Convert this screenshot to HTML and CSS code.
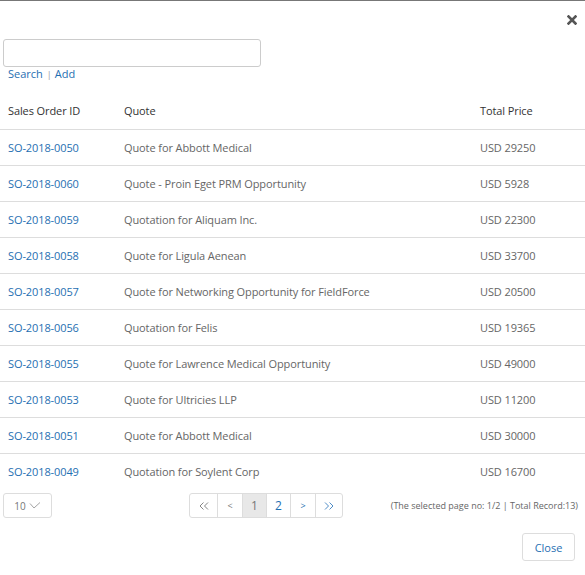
FILE: index.html
```html
<!DOCTYPE html>
<html>
<head>
<meta charset="utf-8">
<link rel="stylesheet" href="styles.css">
</head>
<body>
<div class="modal">
  <div class="top">
    <span class="close-x">
      <svg width="10" height="10" viewBox="0 0 10 10"><path d="M1.5 1.5 L8.5 8.5 M8.5 1.5 L1.5 8.5" stroke="#555" stroke-width="2.6" stroke-linecap="square"/></svg>
    </span>
  </div>
  <div class="search">
    <input class="search-input" type="text">
    <div class="search-links"><a>Search</a><span class="sep">|</span><a>Add</a></div>
  </div>
  <table class="grid">
    <thead>
      <tr><th class="c1">Sales Order ID</th><th class="c2">Quote</th><th class="c3">Total Price</th></tr>
    </thead>
    <tbody>
      <tr><td class="c1"><a>SO-2018-0050</a></td><td class="c2">Quote for Abbott Medical</td><td class="c3">USD 29250</td></tr>
      <tr><td class="c1"><a>SO-2018-0060</a></td><td class="c2">Quote - Proin Eget PRM Opportunity</td><td class="c3">USD 5928</td></tr>
      <tr><td class="c1"><a>SO-2018-0059</a></td><td class="c2">Quotation for Aliquam Inc.</td><td class="c3">USD 22300</td></tr>
      <tr><td class="c1"><a>SO-2018-0058</a></td><td class="c2">Quote for Ligula Aenean</td><td class="c3">USD 33700</td></tr>
      <tr><td class="c1"><a>SO-2018-0057</a></td><td class="c2">Quote for Networking Opportunity for FieldForce</td><td class="c3">USD 20500</td></tr>
      <tr><td class="c1"><a>SO-2018-0056</a></td><td class="c2">Quotation for Felis</td><td class="c3">USD 19365</td></tr>
      <tr><td class="c1"><a>SO-2018-0055</a></td><td class="c2">Quote for Lawrence Medical Opportunity</td><td class="c3">USD 49000</td></tr>
      <tr><td class="c1"><a>SO-2018-0053</a></td><td class="c2">Quote for Ultricies LLP</td><td class="c3">USD 11200</td></tr>
      <tr><td class="c1"><a>SO-2018-0051</a></td><td class="c2">Quote for Abbott Medical</td><td class="c3">USD 30000</td></tr>
      <tr><td class="c1"><a>SO-2018-0049</a></td><td class="c2">Quotation for Soylent Corp</td><td class="c3">USD 16700</td></tr>
    </tbody>
  </table>
  <div class="pager-row">
    <div class="size">10 <svg width="12" height="8" viewBox="0 0 12 8"><path d="M1 1.5 L5 6 L11 0.5" fill="none" stroke="#999" stroke-width="0.9"/></svg></div>
    <div class="pager">
      <span class="pb w28"><svg width="10" height="8" viewBox="0 0 10 8"><path d="M4.5 0.5 L1 4 L4.5 7.5 M9 0.5 L5.5 4 L9 7.5" fill="none" stroke="#777" stroke-width="0.9"/></svg></span><span class="pb w25 gray sm">&lt;</span><span class="pb w24 active">1</span><span class="pb w24 blue">2</span><span class="pb w25 blue sm">&gt;</span><span class="pb w28"><svg width="10" height="8" viewBox="0 0 10 8"><path d="M1 0.5 L4.5 4 L1 7.5 M5.5 0.5 L9 4 L5.5 7.5" fill="none" stroke="#3a7fc0" stroke-width="0.9"/></svg></span>
    </div>
    <div class="info">(The selected page no: 1/2 | Total Record:13)</div>
  </div>
  <div class="footer">
    <button class="close-btn">Close</button>
  </div>
</div>
</body>
</html>
```
FILE: styles.css
```css
* { box-sizing: border-box; }
html, body { margin: 0; padding: 0; background: #fff; }
body { font-family: "Open Sans", "Liberation Sans", sans-serif; color: #555; }
.modal { width: 585px; height: 575px; border-top: 1px solid #777; }
.top { height: 38px; display: flex; justify-content: flex-end; padding: 14px 8px 0 0; }
.close-x { display: block; width: 10px; height: 10px; }
.close-x svg { display: block; }
.search { padding: 0 0 0 3px; }
.search-input { display: block; width: 258px; height: 28px; border: 1px solid #ccc; border-radius: 3px; margin: 0; padding: 0; outline: none; }
.search-links { font-family: "Open Sans", sans-serif; font-size: 11px; padding-left: 5px; line-height: 14px; color: #1a6fb5; }
.search-links a { color: #1f6fb2; }
.sep { color: #999; font-size: 9px; margin: 0 3px 0 4px; }
.grid { width: 585px; border-collapse: collapse; margin-top: 11px; font-family: "Open Sans", sans-serif; font-size: 11px; letter-spacing: -0.1px; }
.grid th { font-weight: normal; color: #333; text-align: left; height: 36px; padding: 0; border-bottom: 1px solid #ddd; vertical-align: middle; }
.grid td { height: 36px; padding: 0; border-bottom: 1px solid #ddd; vertical-align: middle; color: #666; }
.grid tbody tr:last-child td { border-bottom: none; }
.grid td a { color: #1f6fb2; }
.c1 { width: 124px; padding-left: 8px !important; }
.c2 { width: 356px; }
.pager-row { display: flex; align-items: center; height: 25px; margin-top: 4px; padding-left: 3px; }
.size { width: 49px; height: 25px; border: 1px solid #ddd; border-radius: 3px; display: flex; align-items: center; justify-content: center; gap: 3px; font-size: 10px; color: #777; }
.pager { display: flex; margin-left: 137px; height: 25px; border: 1px solid #ddd; border-radius: 3px; overflow: hidden; }
.pb { height: 23px; display: flex; align-items: center; justify-content: center; border-left: 1px solid #ddd; font-size: 12px; color: #888; }
.pb:first-child { border-left: none; }
.w28 { width: 27px; }
.w25 { width: 25px; }
.w24 { width: 24px; }
.sm { font-size: 9px; }
.gray { color: #777; }
.blue { color: #1f6fb2; }
.active { background: #e8e8e8; color: #777; }
.info { margin-left: auto; padding-right: 7px; font-size: 9px; color: #666; }
.footer { display: flex; justify-content: flex-end; padding: 15px 10px 0 0; }
.close-btn { width: 53px; height: 28px; border: 1px solid #ddd; border-radius: 3px; background: #fff; color: #1f6fb2; font-family: "Open Sans", sans-serif; font-size: 11px; padding: 0; }
```
